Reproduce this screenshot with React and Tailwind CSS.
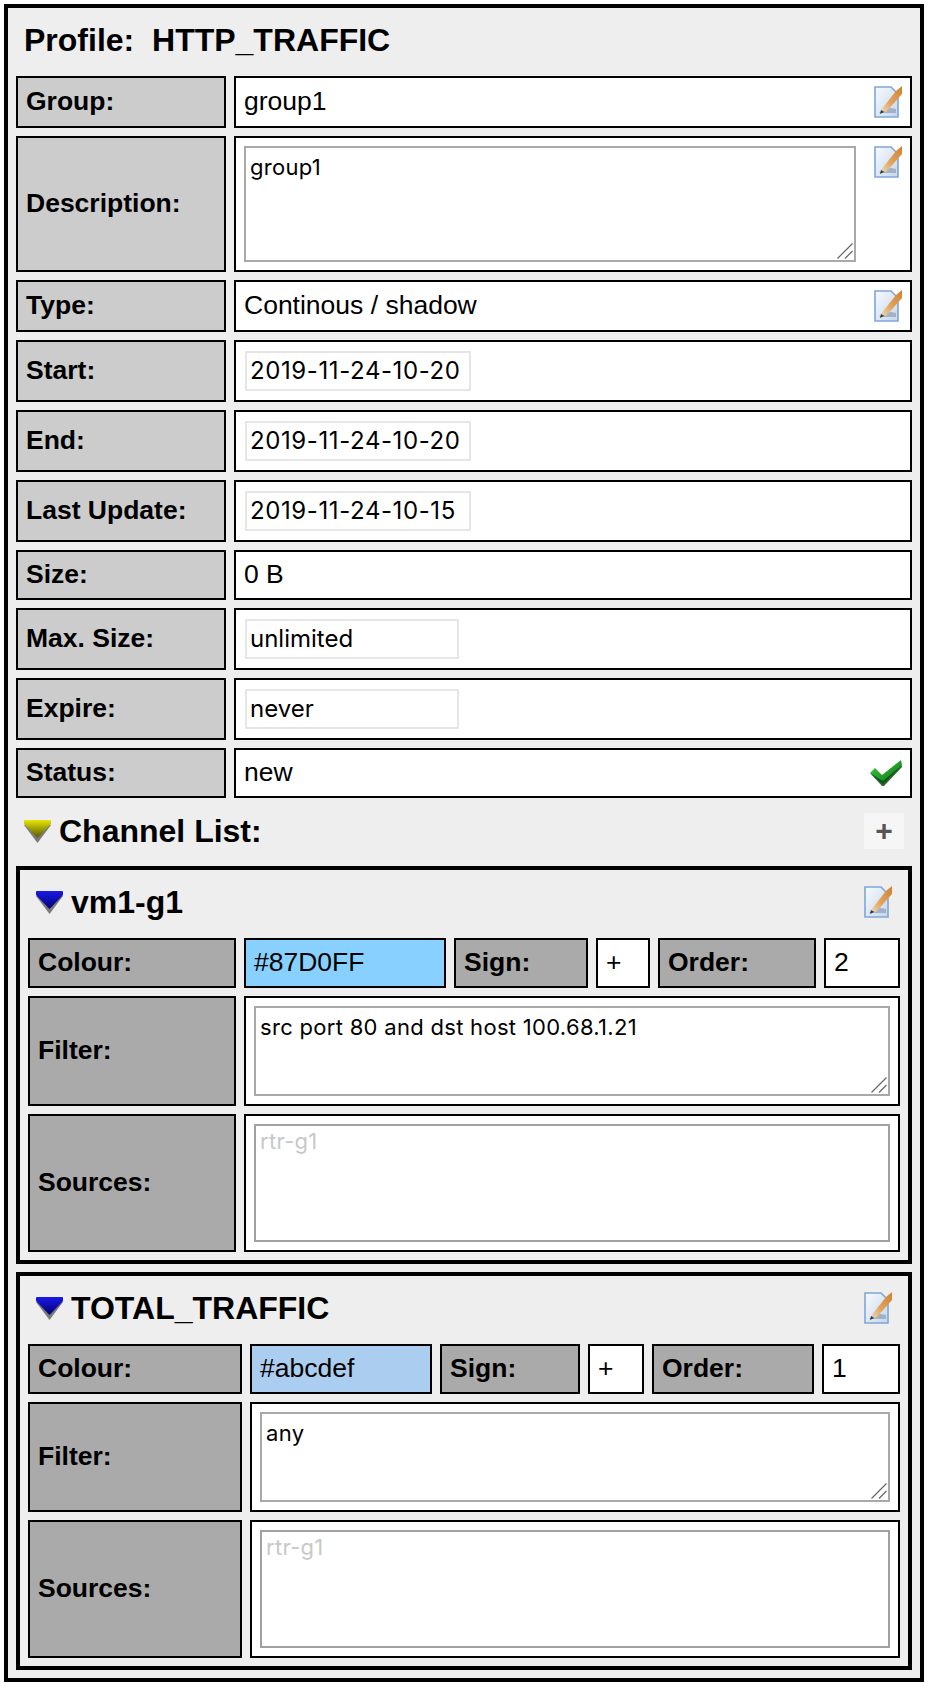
import React from 'react';

const FONT = "font-['Liberation_Sans',Arial,sans-serif]";

const PencilIcon = ({ id }) => (
  <svg width="28" height="32" viewBox="0 0 28 32" className="block blur-[0.4px]">
    <defs>
      <linearGradient id={`page-${id}`} x1="0" y1="0" x2="1" y2="1">
        <stop offset="0" stopColor="#f7fafe" />
        <stop offset="1" stopColor="#c6d6ea" />
      </linearGradient>
      <linearGradient id={`wood-${id}`} x1="1" y1="0" x2="0" y2="1">
        <stop offset="0" stopColor="#cf8230" />
        <stop offset="0.6" stopColor="#e3a45c" />
        <stop offset="1" stopColor="#ecd9bc" />
      </linearGradient>
    </defs>
    <path d="M1 1H17L24 8V31H1Z" fill={`url(#page-${id})`} stroke="#7fa6d8" strokeWidth="1.6" />
    <path d="M5 27H22V23L12 21Z" fill="#8fa3b8" opacity="0.75" />
    <path d="M7 24L22 5L28 0V8L12 26Z" fill={`url(#wood-${id})`} />
    <path d="M6 28L7 24L10 26Z" fill="#333333" />
  </svg>
);

const ArrowIcon = ({ id, top, bottom }) => (
  <svg width="27" height="23" viewBox="0 0 27 23" className="block">
    <defs>
      <linearGradient id={`arrow-${id}`} x1="0" y1="0" x2="0" y2="1">
        <stop offset="0" stopColor={top} />
        <stop offset="1" stopColor={bottom} />
      </linearGradient>
    </defs>
    <path d="M0 5L13.5 23L27 5Z" fill="#7a7a7a" />
    <path d="M0 1Q0 0 1 0H26Q27 0 27 1V4L13.5 18L0 4Z" fill={`url(#arrow-${id})`} />
  </svg>
);

const CheckIcon = () => (
  <svg width="32" height="26" viewBox="0 0 32 26" className="block">
    <defs>
      <linearGradient id="check" x1="0" y1="0" x2="1" y2="1">
        <stop offset="0" stopColor="#3fcf42" />
        <stop offset="1" stopColor="#0a7012" />
      </linearGradient>
    </defs>
    <path d="M0 13L5 8L12 15L31 0L32 5L13 24Z" fill="url(#check)" />
    <path d="M0 13L12 26H14L32 7V5L13 21Z" fill="#0a4a10" opacity="0.85" />
  </svg>
);

const Label = ({ dark, children }) => (
  <div className={`flex items-center border-2 border-black pl-2 text-[26.5px] font-bold ${dark ? 'bg-[#aaaaaa]' : 'bg-[#cccccc]'}`}>
    {children}
  </div>
);

const Value = ({ bg = 'bg-white', className = '', children }) => (
  <div className={`flex items-center justify-between border-2 border-black text-[26.5px] ${bg} ${className}`}>
    {children}
  </div>
);

const BoxField = ({ width, value, spacing = '' }) => (
  <div className={`flex h-10 items-center whitespace-nowrap border-2 border-[#e6e6e6] pl-[3px] font-['Inter',sans-serif] text-[24px] ${spacing} ${width}`}>{value}</div>
);

const Row = ({ label, height, children, valueClass = 'pl-2' }) => (
  <div className={`grid grid-cols-[210px_678px] gap-2 ${height}`}>
    <Label>{label}</Label>
    <Value className={valueClass}>{children}</Value>
  </div>
);

// textarea with the big mac style grip drawn over the corner
const Area = ({ value, className = '' }) => (
  <div className={`relative ${className}`}>
    <textarea
      readOnly
      defaultValue={value}
      className="block h-full w-full resize-none border-2 border-[#a9a9a9] bg-white px-1 pb-0.5 pt-[6px] font-['Inter',sans-serif] text-[22px] leading-[26px] tracking-[0.3px] text-black outline-none"
    />
    <svg width="16" height="16" viewBox="0 0 16 16" className="absolute bottom-[3px] right-[3px]">
      <path d="M0.5 15.5L15.5 0.5M8 15.5L15.5 8" stroke="#666666" strokeWidth="1.2" fill="none" />
    </svg>
  </div>
);

const Channel = ({ name, id, colour, colourBg, order, filter, cols, labelW }) => (
  <div className="flex flex-col gap-2 border-4 border-black px-2 pb-2">
    <div className="flex h-[60px] items-center justify-between pr-2 pt-1">
      <div className="flex items-center gap-2 pl-2 text-[32px] font-bold">
        <ArrowIcon id={id} top="#1a1ae8" bottom="#000070" />
        {name}
      </div>
      <PencilIcon id={id} />
    </div>
    <div className={`grid h-[50px] gap-2 ${cols}`}>
      <Label dark>Colour:</Label>
      <Value bg={colourBg} className="pl-2">{colour}</Value>
      <Label dark>Sign:</Label>
      <Value className="pl-2">+</Value>
      <Label dark>Order:</Label>
      <Value className="pl-2">{order}</Value>
    </div>
    <div className={`grid h-[110px] gap-2 ${labelW}`}>
      <Label dark>Filter:</Label>
      <Value className="px-2">
        <Area value={filter} className="h-[90px] w-full" />
      </Value>
    </div>
    <div className={`grid h-[138px] gap-2 ${labelW}`}>
      <Label dark>Sources:</Label>
      <Value className="px-2">
        <div className="h-[118px] w-full border-2 border-[#a0a0a0] px-1 py-0.5 font-['Inter',sans-serif] text-[22px] leading-[26px] tracking-[0.3px] text-[#c8c8c8]">rtr-g1</div>
      </Value>
    </div>
  </div>
);

export default function App() {
  return (
    <div className={`${FONT} h-[1690px] w-[930px] bg-white p-1 text-black`}>
      <div className="flex w-[920px] flex-col border-4 border-black bg-[#eeeeee] px-2 pb-2">
        <div className="mb-1 flex h-[64px] items-center whitespace-pre pl-2 text-[32px] font-bold">Profile:  HTTP_TRAFFIC</div>
        <div className="flex flex-col gap-2">
          <Row label="Group:" height="h-[52px]" valueClass="pl-2 pr-2">group1<PencilIcon id="a" /></Row>
          <div className="grid h-[136px] grid-cols-[210px_678px] gap-2">
            <Label>Description:</Label>
            <Value className="items-start pl-2 pr-2 pt-2">
              <Area value="group1" className="h-[116px] w-[612px]" />
              <PencilIcon id="b" />
            </Value>
          </div>
          <Row label="Type:" height="h-[52px]" valueClass="pl-2 pr-2">Continous / shadow<PencilIcon id="c" /></Row>
          <Row label="Start:" height="h-[62px]" valueClass="pl-[9px]"><BoxField width="w-[226px]" spacing="tracking-[0.6px]" value="2019-11-24-10-20" /></Row>
          <Row label="End:" height="h-[62px]" valueClass="pl-[9px]"><BoxField width="w-[226px]" spacing="tracking-[0.6px]" value="2019-11-24-10-20" /></Row>
          <Row label="Last Update:" height="h-[62px]" valueClass="pl-[9px]"><BoxField width="w-[226px]" spacing="tracking-[0.6px]" value="2019-11-24-10-15" /></Row>
          <Row label="Size:" height="h-[50px]">0 B</Row>
          <Row label="Max. Size:" height="h-[62px]" valueClass="pl-[9px]"><BoxField width="w-[214px]" value="unlimited" /></Row>
          <Row label="Expire:" height="h-[62px]" valueClass="pl-[9px]"><BoxField width="w-[214px]" value="never" /></Row>
          <Row label="Status:" height="h-[50px]" valueClass="pl-2 pr-2"><span>new</span><CheckIcon /></Row>
        </div>
        <div className="flex h-[68px] items-center justify-between pb-[2px] pr-2">
          <div className="flex items-center gap-2 pl-2 text-[32px] font-bold">
            <ArrowIcon id="list" top="#e6e600" bottom="#55550a" />
            Channel List:
          </div>
          <div className="flex h-9 w-10 items-center justify-center bg-[#f6f6f6] text-[30px] font-bold leading-none text-[#555555]">+</div>
        </div>
        <div className="flex flex-col gap-2">
          <Channel
            name="vm1-g1"
            id="d"
            colour="#87D0FF"
            colourBg="bg-[#87d0ff]"
            order="2"
            filter="src port 80 and dst host 100.68.1.21"
            cols="grid-cols-[208px_202px_134px_54px_158px_76px]"
            labelW="grid-cols-[208px_656px]"
          />
          <Channel
            name="TOTAL_TRAFFIC"
            id="e"
            colour="#abcdef"
            colourBg="bg-[#abcdef]"
            order="1"
            filter="any"
            cols="grid-cols-[214px_182px_140px_56px_162px_78px]"
            labelW="grid-cols-[214px_650px]"
          />
        </div>
      </div>
    </div>
  );
}
